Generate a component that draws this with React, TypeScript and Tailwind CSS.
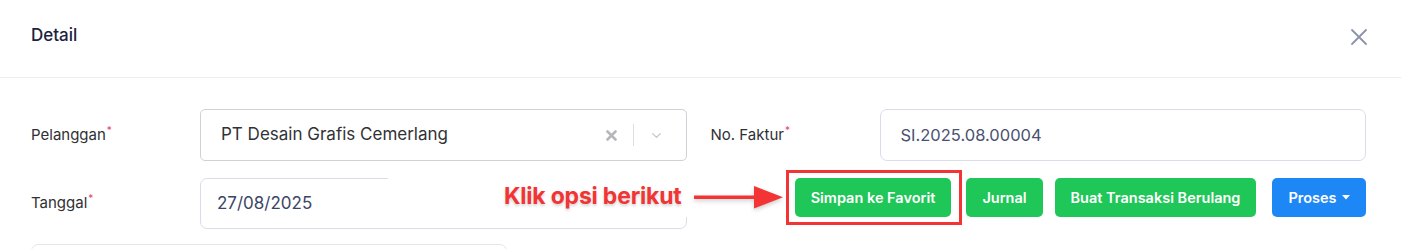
import { ChevronDown } from 'lucide-react';

const font = { fontFamily: 'Inter, "Noto Sans", sans-serif' };

function Label({ text }: { text: string }) {
  return (
    <label className="w-[169px] shrink-0 text-[15px] text-[#2f3033]">
      {text}
      <span className="relative -top-[6px] ml-[1px] text-[10px] text-[#ee3f6a]">*</span>
    </label>
  );
}

export default function App() {
  return (
    <div className="w-[1401px] h-[249px] overflow-hidden bg-white" style={font}>
      <div className="h-[78px] flex items-center justify-between pl-[31px] pr-[33px] border-b border-[#ededf0]">
        <h2 className="text-[17px] font-medium text-[#1b2240] -mt-[6px]">Detail</h2>
        <button className="-mt-[4px]">
          <svg width="18" height="18" viewBox="0 0 18 18" fill="none" stroke="#8b93aa" strokeWidth="1.8" strokeLinecap="round">
            <path d="M2 2 L16 16 M16 2 L2 16" />
          </svg>
        </button>
      </div>

      <div className="pt-[31px] pl-[31px] pr-[35px]">
        <div className="flex gap-[24px]">
          <div className="flex flex-1 items-center">
            <Label text="Pelanggan" />
            <div className="flex-1 h-[52px] flex items-center rounded-[5px] border border-[#cfd1d6] pl-[20px] pr-[22px]">
              <span className="flex-1 text-[17px] text-[#313236]">PT Desain Grafis Cemerlang</span>
              <svg width="11" height="11" viewBox="0 0 11 11" stroke="#b5b7bb" strokeWidth="2.6" strokeLinecap="round" className="mr-[16px]">
                <path d="M1.5 1.5 L9.5 9.5 M9.5 1.5 L1.5 9.5" />
              </svg>
              <span className="w-px h-[22px] bg-[#dcdde0]" />
              <ChevronDown size={15} strokeWidth={2} color="#c2c4c8" className="ml-[15px]" />
            </div>
          </div>
          <div className="flex flex-1 items-center">
            <Label text="No. Faktur" />
            <div className="flex-1 h-[52px] flex items-center rounded-[7px] border border-[#dadde8] pl-[20px]">
              <span className="text-[16.5px] text-[#4a5170]">SI.2025.08.00004</span>
            </div>
          </div>
        </div>

        <div className="flex gap-[24px] mt-[17px]">
          <div className="flex flex-1 items-center">
            <Label text="Tanggal" />
            <div className="relative flex-1 h-[51px] flex items-center rounded-[7px] border border-[#dadde8] pl-[16px]">
              <span className="text-[17px] text-[#3d4565]">27/08/2025</span>
              <div className="absolute left-[187px] -right-[12px] -top-[4px] h-[42px] bg-white flex items-center justify-end pr-[16px]">
                <span
                  className="text-[23px] font-bold text-[#f23434] tracking-[-0.2px]"
                  style={{ textShadow: '0 2px 3px rgba(0,0,0,0.18)' }}
                >
                  Klik opsi berikut
                </span>
              </div>
            </div>
          </div>
          <div className="flex flex-1 items-start">
            <div className="flex items-center h-[39px] -ml-[17px]">
              <svg width="90" height="26" viewBox="0 0 90 26" style={{ filter: 'drop-shadow(0 2px 2px rgba(0,0,0,0.2))' }}>
                <rect x="0" y="10.5" width="62" height="3.5" fill="#f23434" />
                <path d="M60 1 L89 12.2 L60 23.5 Z" fill="#f23434" />
              </svg>
            </div>
            <div className="flex flex-1 justify-end items-center text-white text-[14.5px] font-semibold">
              <div className="relative">
                <div className="absolute -left-[9px] -right-[11px] -top-[8px] -bottom-[8px] border-[3px] border-[#f23434]" />
                <button className="w-[156px] h-[39px] rounded-[5px] bg-[#1fc658]">Simpan ke Favorit</button>
              </div>
              <button className="ml-[15px] w-[77px] h-[39px] rounded-[5px] bg-[#1fc658]">Jurnal</button>
              <button className="ml-[12px] w-[201px] h-[39px] rounded-[5px] bg-[#1fc658]">Buat Transaksi Berulang</button>
              <button className="ml-[16px] w-[94px] h-[39px] rounded-[5px] bg-[#1e87f6] flex items-center justify-center gap-[5px]">
                Proses
                <svg width="8" height="5" viewBox="0 0 8 5"><path d="M0 0 L8 0 L4 4.5 Z" fill="white" /></svg>
              </button>
            </div>
          </div>
        </div>

        <div className="mt-[15px] w-[476px] h-[40px] rounded-[7px] border border-[#e4e6ee]" />
      </div>
    </div>
  );
}
